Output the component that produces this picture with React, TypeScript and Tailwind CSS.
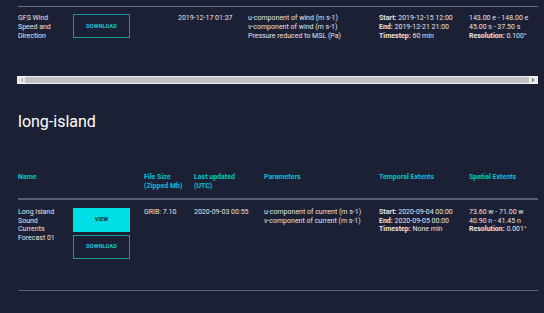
import type { ReactNode } from "react";

const font = { fontFamily: "Roboto, 'Noto Sans', sans-serif" };

function Btn({ filled, children }: { filled?: boolean; children: ReactNode }) {
  return (
    <div
      className={`flex h-[24px] w-[57px] items-center justify-center text-[5.5px] font-bold tracking-[0.02em] ${
        filled ? "bg-[#00dfe5] text-[#1c2035]" : "border border-[#1a98a0] text-[#14c8d2]"
      }`}
    >
      {children}
    </div>
  );
}

function Kv({ k, v }: { k: string; v: string }) {
  return (
    <div>
      <span className="font-bold">{k}</span> {v}
    </div>
  );
}

export default function App() {
  return (
    <main style={font} className="h-[313px] w-[544px] overflow-hidden whitespace-nowrap bg-[#1c2035] pl-[18px] pr-[6px] pt-[6px] text-[7px] leading-[8.75px] text-[#e4e5ea]">
      <div className="border-t border-[#6f7285]" />
      <div className="grid grid-cols-[55px_105px_70px_131px_90px_1fr] pt-[7px]">
        <div>
          GFS Wind
          <br />
          Speed and
          <br />
          Direction
        </div>
        <div>
          <Btn>DOWNLOAD</Btn>
        </div>
        <div>2019-12-17 01:37</div>
        <div>
          <div>u-component of wind (m s-1)</div>
          <div>v-component of wind (m s-1)</div>
          <div>Pressure reduced to MSL (Pa)</div>
        </div>
        <div>
          <Kv k="Start:" v="2019-12-15 12:00" />
          <Kv k="End:" v="2019-12-21 21:00" />
          <Kv k="Timestep:" v="60 min" />
        </div>
        <div>
          <div>143.00 e - 148.00 e</div>
          <div>45.00 s - 37.50 s</div>
          <Kv k="Resolution:" v="0.100°" />
        </div>
      </div>

      <div className="-ml-px mt-[36px] flex h-[8px] w-[521px] border border-[#f4f4f4] bg-[#e8e8e8]">
        <div className="flex w-[7px] items-center justify-center">
          <div className="h-0 w-0 border-y-[2px] border-r-[2px] border-y-transparent border-r-[#9a9a9a]" />
        </div>
        <div className="flex-1 bg-[#c1c1c1]" />
        <div className="flex w-[8px] items-center justify-center">
          <div className="h-0 w-0 border-y-[2px] border-l-[2px] border-y-transparent border-l-[#505050]" />
        </div>
      </div>

      <h2 className="mt-[28px] text-[16px] leading-[20px] text-white">long-island</h2>

      <div className="mt-[41px] grid grid-cols-[55px_71px_50px_70px_115px_90px_1fr] border-b-2 border-[#5a5d70] pb-[7px] font-bold text-[#00c4d2]">
        <div>Name</div>
        <div />
        <div>
          File Size
          <br />
          (Zipped Mb)
        </div>
        <div>
          Last updated
          <br />
          (UTC)
        </div>
        <div>Parameters</div>
        <div>Temporal Extents</div>
        <div>Spatial Extents</div>
      </div>

      <div className="grid grid-cols-[55px_71px_50px_70px_115px_90px_1fr] pt-[8px]">
        <div>
          Long Island
          <br />
          Sound
          <br />
          Currents
          <br />
          Forecast 01
        </div>
        <div className="flex flex-col gap-[3px]">
          <Btn filled>VIEW</Btn>
          <Btn>DOWNLOAD</Btn>
        </div>
        <div>GRIB: 7.10</div>
        <div>2020-09-03 00:55</div>
        <div>
          <div>u-component of current (m s-1)</div>
          <div>v-component of current (m s-1)</div>
        </div>
        <div>
          <Kv k="Start:" v="2020-09-04 00:00" />
          <Kv k="End:" v="2020-09-05 00:00" />
          <Kv k="Timestep:" v="None min" />
        </div>
        <div>
          <div>73.60 w - 71.00 w</div>
          <div>40.90 n - 41.45 n</div>
          <Kv k="Resolution:" v="0.001°" />
        </div>
      </div>

      <div className="mt-[31px] border-t border-[#5d6073]" />
    </main>
  );
}
